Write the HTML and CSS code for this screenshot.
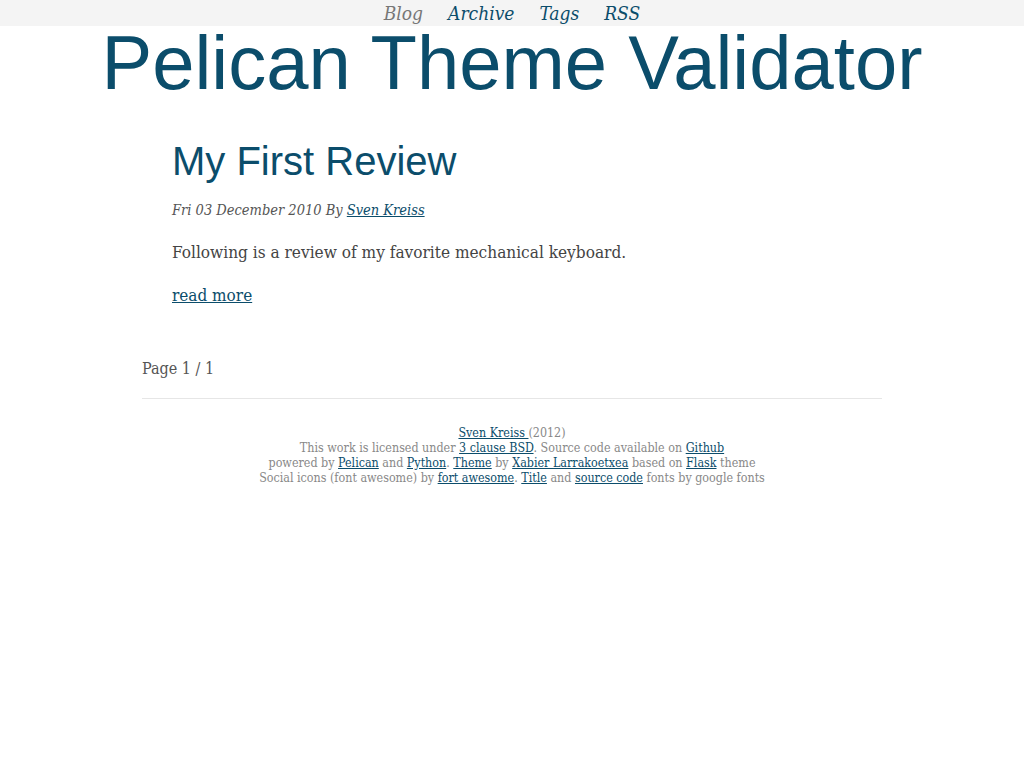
FILE: index.html
```html
<!DOCTYPE html>
<html>
<head>
<meta charset="utf-8">
<title>Pelican Theme Validator</title>
<link rel="stylesheet" href="styles.css">
</head>
<body>
<nav class="topnav">
  <a class="nav-link nav-active" href="#">Blog</a>
  <a class="nav-link" href="#">Archive</a>
  <a class="nav-link" href="#">Tags</a>
  <a class="nav-link" href="#">RSS</a>
</nav>
<header class="site-header">
  <h1 class="site-title">Pelican Theme Validator</h1>
</header>
<main class="container">
  <article class="entry">
    <h2 class="entry-title">My First Review</h2>
    <p class="entry-meta">Fri 03 December 2010 By <a href="#">Sven Kreiss</a></p>
    <p class="entry-summary">Following is a review of my favorite mechanical keyboard.</p>
    <p class="entry-more"><a href="#">read more</a></p>
  </article>
  <p class="paginator">Page 1 / 1</p>
  <hr class="divider">
  <footer class="site-footer">
    <a href="#">Sven Kreiss </a>(2012)<br>
    This work is licensed under <a href="#">3 clause BSD</a>. Source code available on <a href="#">Github</a><br>
    powered by <a href="#">Pelican</a> and <a href="#">Python</a>. <a href="#">Theme</a> by <a href="#">Xabier Larrakoetxea</a> based on <a href="#">Flask</a> theme<br>
    Social icons (font awesome) by <a href="#">fort awesome</a>. <a href="#">Title</a> and <a href="#">source code</a> fonts by google fonts
  </footer>
</main>
</body>
</html>
```

FILE: styles.css
```css
html, body {
  margin: 0;
  padding: 0;
  background: #fff;
}
body {
  font-family: "DejaVu Serif Condensed", "DejaVu Serif", Georgia, serif;
  color: #444;
}
a {
  color: #0b4d6b;
}
.topnav {
  background: #f4f4f4;
  height: 26px;
  display: flex;
  justify-content: center;
  gap: 25px;
  align-items: center;
}
.nav-link {
  font-style: italic;
  font-size: 19px;
  text-decoration: none;
  color: #0b4d6b;
  line-height: 26px;
}
.nav-active {
  color: #777;
}
.site-header {
  text-align: center;
}
.site-title {
  margin: 0;
  font-family: "Liberation Sans", Arial, sans-serif;
  font-weight: normal;
  font-size: 76px;
  line-height: 74px;
  color: #0b4d6b;
}
.container {
  width: 740px;
  margin: 0 auto;
}
.entry {
  padding: 36px 30px 20px;
}
.entry-title {
  margin: 0;
  font-family: "Liberation Sans", Arial, sans-serif;
  font-weight: normal;
  font-size: 40px;
  line-height: 50px;
  color: #0b4d6b;
}
.entry-meta {
  margin: 16px 0 0;
  font-style: italic;
  font-size: 14.5px;
  color: #555;
}
.entry-summary {
  margin: 24px 0 0;
  font-size: 17.1px;
}
.entry-more {
  margin: 23px 0 0;
  font-size: 17px;
}
.paginator {
  margin: 34px 0 0;
  font-size: 16px;
  color: #555;
}
.divider {
  border: 0;
  border-top: 1px solid #e6e6e6;
  margin: 20px 0 26px;
}
.site-footer {
  text-align: center;
  font-size: 12.4px;
  line-height: 15px;
  color: #888;
}
```
